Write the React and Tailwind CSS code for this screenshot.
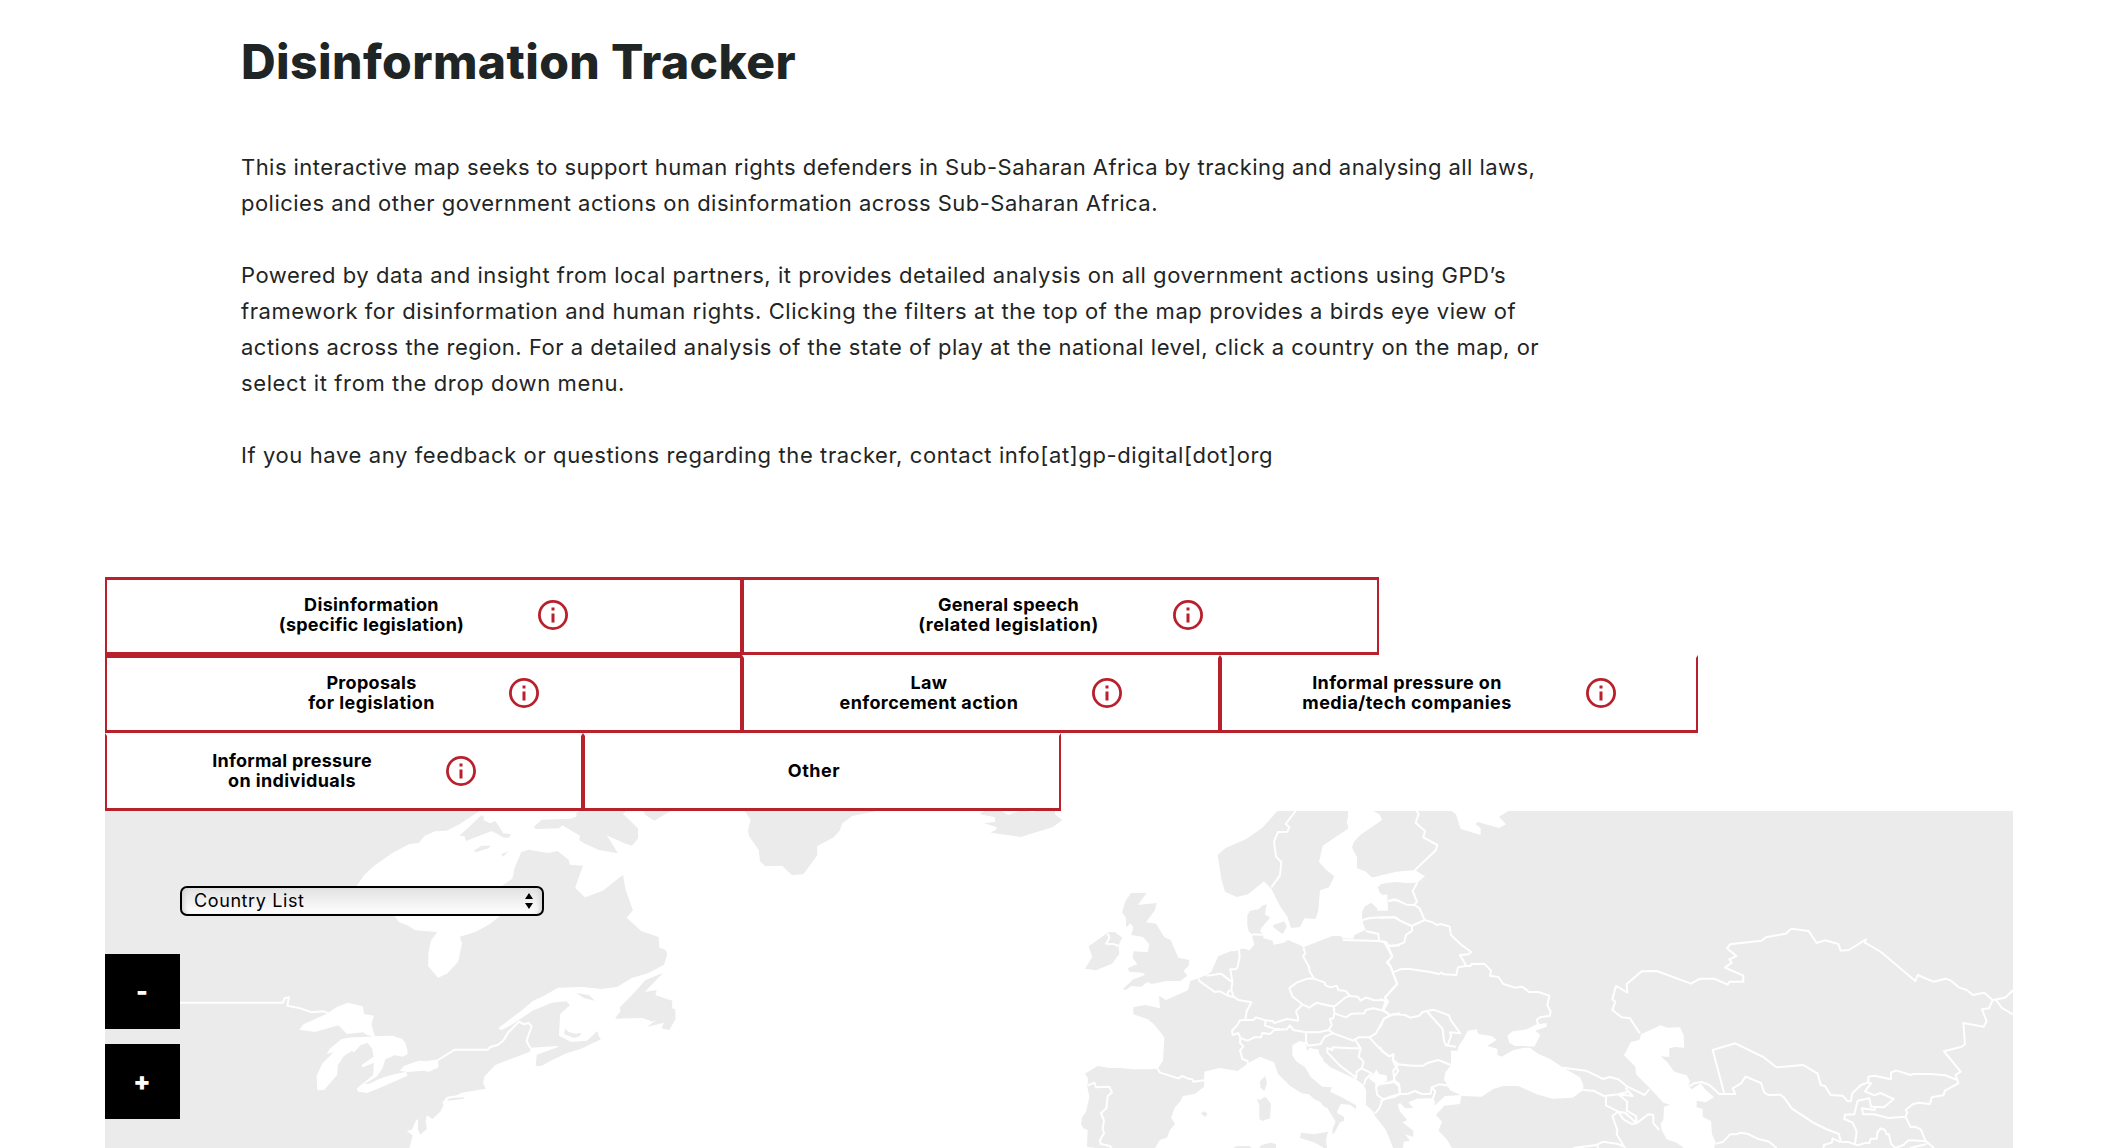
import React from "react";

const INTRO = [
  [
    { text: "This interactive map seeks to support human rights defenders in Sub-Saharan Africa by tracking and analysing all laws,", spacing: "tracking-[0.45px]" },
    { text: "policies and other government actions on disinformation across Sub-Saharan Africa.", spacing: "tracking-[0.48px]" },
  ],
  [
    { text: "Powered by data and insight from local partners, it provides detailed analysis on all government actions using GPD’s", spacing: "tracking-[0.53px]" },
    { text: "framework for disinformation and human rights. Clicking the filters at the top of the map provides a birds eye view of", spacing: "tracking-[0.56px]" },
    { text: "actions across the region. For a detailed analysis of the state of play at the national level, click a country on the map, or", spacing: "tracking-[0.5px]" },
    { text: "select it from the drop down menu.", spacing: "tracking-[0.61px]" },
  ],
  [{ text: "If you have any feedback or questions regarding the tracker, contact info[at]gp-digital[dot]org", spacing: "tracking-[0.6px]" }],
];

const FILTER_ROWS = [
  [
    { lines: [["Disinformation", "tracking-[0.35px]"], ["(specific legislation)", "tracking-[0.28px]"]], width: "w-[637px]", top: true, info: true },
    { lines: [["General speech", "tracking-[0.25px]"], ["(related legislation)", "tracking-[0.48px]"]], width: "w-[637px]", top: true, info: true },
  ],
  [
    { lines: [["Proposals", "tracking-[0.3px]"], ["for legislation", "tracking-[0.42px]"]], width: "w-[637px]", top: true, info: true },
    { lines: [["Law", "tracking-[0.4px]"], ["enforcement action", "tracking-[0.38px]"]], width: "w-[478px]", info: true },
    { lines: [["Informal pressure on", "tracking-[0.38px]"], ["media/tech companies", "tracking-[0.42px]"]], width: "w-[478px]", info: true },
  ],
  [
    { lines: [["Informal pressure", "tracking-[0.25px]"], ["on individuals", "tracking-[0.38px]"]], width: "w-[478px]", info: true },
    { lines: [["Other", "tracking-[0.5px]"]], width: "w-[478px]" },
  ],
];

function InfoIcon() {
  return (
    <svg className="h-[30px] w-[30px] shrink-0" viewBox="0 0 30 30" fill="none">
      <circle cx="15" cy="15" r="13.6" stroke="#b8202c" strokeWidth="2.8" />
      <path d="M13.5 7.4h3v3h-3zM13.5 13.4h3v9h-3z" fill="#b8202c" />
    </svg>
  );
}

function Filter({ item }) {
  return (
    <button
      className={`flex h-[78px] items-center justify-center gap-[74px] border-x-2 border-y-[3px] border-[#b8202c] pb-[2px] ${item.width} ${item.top ? "" : "border-t-transparent"} ${item.info ? "" : "pr-4"}`}
    >
      <span className="flex flex-col text-center text-[18px] leading-[20px] font-bold text-black">
        {item.lines.map(([text, spacing]) => (
          <span key={text} className={`whitespace-nowrap ${spacing}`}>{text}</span>
        ))}
      </span>
      {item.info && <InfoIcon />}
    </button>
  );
}

const AMERICA_LAND = [
  "38,33 985,33 935,72 902,92 872,94 846,108 832,128 806,133 764,160 718,198 693,226 672,262 730,320 770,348 782,367 805,377 822,391 878,396 862,422 856,458 855,498 880,533 903,521 931,485 941,430 935,410 975,396 1010,373 1035,350 1042,300 1037,262 1068,236 1074,203 1091,156 1109,149 1158,159 1183,153 1211,180 1213,194 1247,197 1237,229 1227,264 1252,292 1297,272 1348,224 1355,271 1373,331 1357,353 1395,394 1438,411 1440,443 1455,449 1460,462 1452,494 1411,520 1370,534 1333,561 1293,567 1246,561 1184,563 1147,588 1119,604 1093,630 1033,684 1040,691 1070,672 1119,632 1168,608 1205,604 1214,616 1189,642 1186,707 1217,726 1257,722 1283,693 1287,709 1292,718 1245,745 1202,761 1168,781 1140,799 1127,797 1130,764 1184,741 1182,738 1115,743 1112,755 1025,795 998,829 994,848 1001,866 940,878 928,886 903,890 891,908 894,916 886,935 866,957 852,946 849,962 852,987 835,1004 829,987 830,957 824,962 814,990 801,992 816,1006 808,1044 38,1044",
  "1122,80 1143,59 1215,56 1230,50 1230,38 1240,33 1355,33 1348,42 1386,85 1386,115 1371,137 1351,130 1307,106 1335,160 1287,150 1252,131 1237,120 1240,108 1195,76 1186,85 1128,87",
  "990,45 997,52 995,60 1012,70 1025,63 1036,82 1045,100 1065,102 1060,113 1047,113 1016,93 951,123 947,109 934,107 958,82",
  "970,153 990,137 1014,137 1008,145 977,156",
  "1040,163 1058,154 1045,170",
  "1400,33 1468,33 1427,62 1404,44",
  "1449,519 1420,555 1403,576 1433,570 1430,586 1473,602 1472,625 1480,628 1481,657 1465,690 1445,685 1452,668 1408,681 1432,661 1422,665 1398,654 1328,656 1342,632 1340,622 1375,580 1405,540",
];
const AMERICA_WATER = [
  "529,689 540,673 599,641 625,620 652,608 690,619 693,642 718,647 712,671 716,692 722,712 700,704 690,697 650,702 628,676 569,696",
  "599,762 606,747 636,717 663,712 690,712 700,730 685,735 668,757 662,753 642,768 627,795 625,825 592,870 575,871 573,827 588,790 616,757",
  "680,712 720,709 765,707 790,717 798,730 803,752 803,763 791,770 768,765 766,752 768,767 747,778 740,805 726,829 694,852 707,851 735,835 765,824 800,815 803,827 740,860 701,879 679,875 674,866 716,825 718,788 690,802 687,795 717,770 714,747 703,730 690,727",
  "783,812 795,797 832,782 850,784 880,778 882,802 857,815 843,812 803,816",
];
const AMERICA_ISLETS = [
  "1229,579 1262,585 1277,602 1250,595",
  "1202,685 1210,696 1228,701 1243,699 1238,709 1224,714 1199,702",
  "903,898 915,894 948,892 945,896 907,902",
];
const AMERICA_BORDERS = [
  "228,608 488,608 492,595 503,592 499,617 532,625 561,637 590,634 605,640",
  "880,780 923,749 1006,749 1012,741 1031,735 1045,722 1058,697 1085,665 1097,673 1109,669 1117,678 1104,723 1114,745",
];

const ATLANTIC_LAND = [
  "134,33 530,33 457,48 427,70 419,92 401,112 351,139 352,166 310,223 275,225 247,198 195,198 180,183 176,150 147,108 144,91 152,59",
  "853,33 905,33 925,45 957,33 981,33 998,36 1008,33 1065,33 1065,43 1087,61 1057,82 962,111 872,98 890,87 889,81 852,70 885,66 886,52 839,43",
];

const EUROPE_LAND = [
  "652,33 880,33 866,47 860,66 866,85 788,137 777,185 798,209 823,229 807,262 780,271 775,330 767,357 733,355 720,381 693,384 683,352 660,318 634,266 612,244 564,283 530,291 495,275 484,237 473,165 497,144 559,117 607,83",
  "931,33 960,45 967,60 900,105 882,125 876,142 891,172 891,204 918,215 935,232 975,227 1020,213 1020,33",
  "1020,246 1010,246 975,252 953,260 958,275 974,285 985,283 985,332 959,332 934,308 915,319 906,335 906,358 910,372 917,389 883,405 880,416 848,415 843,409 819,407 730,442 718,434 684,420 670,429 640,434 638,422 611,415 608,403 600,392 607,380 627,357 630,352 615,344 617,330 620,312 605,318 597,327 570,332 562,346 562,377 567,395 580,405 577,412 583,434 567,452 558,446 537,447 530,453 512,454 475,468 454,515 440,525 415,535 391,543 384,571 318,600 297,587 300,625 255,615 220,622 220,643 264,658 284,675 313,712 309,782 293,807 263,808 218,808 180,804 148,804 113,798 75,821 84,835 82,860 88,892 78,935 66,952 63,973 70,985 83,990 81,1040 108,1044 285,1044 300,1020 322,1012 330,990 345,972 333,953 345,922 360,905 368,889 405,881 432,860 433,815 478,804 533,813 566,788 600,770 642,787 654,822 690,857 725,880 747,883 762,897 780,905 792,920 802,924 827,965 818,985 817,1001 823,1000 840,967 852,962 852,950 830,938 842,912 870,914 888,928 888,916 842,890 810,875 816,862 787,860 753,832 735,802 708,783 697,765 697,736 718,723 738,727 741,753 750,743 762,747 775,748 778,762 790,778 790,783 812,802 850,820 887,837 910,854 918,870 918,915 940,935 945,948 978,990 1000,1044 1020,1044",
  "213,279 260,279 233,315 290,309 285,330 258,367 288,371 313,412 332,420 355,473 388,480 386,497 371,512 382,527 361,543 320,543 275,552 262,546 244,560 214,558 197,570 189,567 220,538 255,525 250,519 208,515 203,505 232,492 218,473 221,454 263,457 268,433 249,411 214,405 220,382 211,370 198,382 198,354 186,337 196,304",
  "147,396 164,396 187,413 175,436 178,461 156,491 108,511 75,506 97,471 86,439 138,402",
  "640,375 673,364 680,380 668,403 640,382",
  "600,845 615,827 621,850 613,873 601,863",
  "590,898 600,899 616,890 633,911 630,955 606,963 598,957 598,915",
  "422,940 434,934 443,942 435,951",
  "723,998 762,1003 804,995 798,1020 801,1044 792,1044 762,1027 720,1014",
  "520,1044 530,1038 568,1038 575,1044",
  "598,1044 603,1036 630,1028 648,1032 648,1044",
];
const EUROPE_WATER = [
  "943,818 949,808 957,822 980,826 982,842 965,850 948,865 945,850 926,835",
];
const EUROPE_BORDERS = [
  "707,33 677,72 688,82 682,95 654,96 642,125 648,170 664,186 660,226 634,262",
  "143,400 148,414 138,431 160,432 176,438",
  "578,403 608,404",
  "537,447 539,470 533,500 528,508 511,508 517,545 514,570 521,590 535,600 574,607 560,634 556,660 540,661 532,675 516,692 518,705 535,699 541,714 563,722 583,712 603,712 607,699 630,702 643,690 680,688 690,676 700,690 738,697 775,697 808,690",
  "415,535 420,545 465,576 480,574 505,588 521,590",
  "440,527 483,521 513,544",
  "505,588 503,577 512,569",
  "556,660 580,660 588,652 617,661 638,663 643,669 680,657 714,662 714,652 708,634 727,613",
  "617,661 615,677 643,686 660,687",
  "541,712 540,728 550,740 540,751 547,777 563,783 563,795",
  "730,442 736,460 729,468 747,500 749,514 761,535 742,536 710,548 688,564 697,589 727,613 748,623 770,608 815,619 826,617 858,591 870,588 857,573 835,570 830,557 813,562 797,557 793,547 761,536",
  "870,588 893,590 902,602 918,592 940,600 975,601 985,605",
  "822,619 823,640 858,652 875,641 913,640 917,630 940,625 970,632 990,645 1020,640",
  "823,640 820,655 810,657 815,675 806,690 820,700 880,722 895,712 928,712 948,700 972,656 990,645",
  "738,697 738,725 745,737 782,732 788,720 795,710 818,700",
  "848,420 956,423 976,425 985,440 997,470 981,487 992,500 1011,552 975,592 984,607 976,606 968,630",
  "917,393 955,402 957,422",
  "906,360 930,354 965,352 1005,352 1020,362",
  "976,425 986,437 1020,436",
  "985,303 1005,300 1020,303",
  "887,722 902,745 870,745 818,742 817,750 802,744 802,757 840,797 887,832",
  "902,745 896,770 911,785 905,805 890,815 888,837",
  "905,805 935,820 917,838 912,855",
  "928,712 960,747 988,769 1000,763 1000,780 1015,793 1000,812 1003,842 985,848 960,850 948,862 952,885 968,897 958,925 945,940",
  "968,897 1000,892 1018,883",
  "1003,842 1017,852 1020,880",
  "293,807 300,818 355,835 366,828 385,836 397,838 400,845 432,841",
  "83,857 103,848 108,862 148,860 156,878 143,888 139,925 123,940 132,962 128,985 132,1000 120,1020 122,1032 150,1038 155,1044",
];

const EAST_LAND = ["0,33 1899,33 1899,1044 40,1044 18,990 0,965"];
const EAST_WATER = [
  "-8,229 20,222 50,215 105,210 135,229 112,248 80,249 50,246 20,249 -8,255",
  "-8,275 10,285 22,283 24,332 -8,332",
  "-96,33 -20,33 0,45 7,60 -8,67 -60,105 -78,125 -96,137",
  "215,33 385,33 357,50 378,73 357,84 293,66 287,73 302,85 302,105 242,87 228,43",
  "53,915 60,908 75,925 100,924 85,907 110,896 155,895 165,903 163,917 195,888 245,885 240,912 193,917 168,945 186,965 176,992 200,1018 216,1044 68,1044 72,1025 90,1022 75,1003 100,1010 100,992 67,967 82,960 60,935",
  "213,752 232,752 236,738 250,718 263,692 290,688 295,702 335,708 350,719 322,738 353,747 352,764 365,770 400,750 432,743 450,743 472,760 510,777 555,806 600,832 610,855 610,870 578,893 517,896 470,883 415,858 370,858 340,867 305,890 248,888 210,871 192,838 197,815 213,795",
  "382,707 398,694 440,688 470,673 500,670 500,680 466,692 481,705 463,740 433,738 405,738 388,728",
  "783,703 842,676 862,683 900,682 911,705 913,743 885,741 868,745 868,771 842,769 862,787 883,815 920,826 930,843 925,857 935,868 962,850 975,867 1002,892 978,907 950,902 950,922 968,927 968,950 993,963 996,1003 1007,1025 1003,1044 912,1044 890,1028 860,1018 845,990 842,970 850,960 852,920 870,914 850,908 810,865 768,823 766,800 732,766 752,727 779,719",
];
const EAST_BORDERS = [
  "109,33 116,42 107,68 135,93 130,112 172,135 168,150 105,210",
  "112,248 98,273 111,305 103,315 80,314 45,298 25,303",
  "103,315 118,324 134,360 95,378 60,362 45,352 0,354",
  "134,360 160,368 170,375 183,372 209,380 213,405 247,437 274,456 265,463 240,465 259,498 234,502 229,525 190,523 185,517 178,522 150,516 85,506 60,508 38,517",
  "95,378 97,392 78,405 73,427 48,437 25,437",
  "0,423 14,428 37,470 22,487 33,500 38,517 52,552 15,592 24,606 10,630 30,645",
  "0,597 24,606",
  "259,498 270,498 275,492 313,491 333,512 330,527 355,531 370,552 405,563 427,560 447,576 475,576 508,587 502,616 512,635 510,647 480,652 470,660 475,673",
  "0,683 12,656 40,643 75,645 90,653 118,647 128,636 160,629 185,638 207,646 212,660 241,700 210,697 213,708 202,738",
  "142,636 188,687 192,722 198,736 228,740",
  "0,740 8,755 28,769 40,763 38,780 53,793 95,797 130,797 145,788 175,780 212,795",
  "38,780 55,813 43,830 42,846 57,858 60,882 85,881 105,873 125,882 152,881 155,862 178,853 208,857",
  "155,862 166,875 157,900",
  "0,853 43,846",
  "0,905 30,890 60,882",
  "550,803 618,812 670,837 688,831 715,838 742,860 794,885 808,867",
  "610,870 640,872 672,888 715,883 758,888 738,865 745,875 715,883 742,905 740,932 768,948 770,970 735,938 715,935 678,916 678,890",
  "715,935 730,958 755,972 770,970 805,943 820,945 820,970 838,990",
  "715,935 697,948 712,990 710,1003 735,1044",
  "580,1044 650,1035 670,1025 715,1032 730,1040",
  "650,1035 655,1044",
  "780,700 773,690 750,655 725,652 697,630 706,605 697,598 708,558 742,577 740,552 785,514 830,513 933,551 960,536 1002,536 1043,554 1048,545 1090,545 1090,527 1035,503 1055,488 1048,478 1069,468 1041,445 1050,433 1145,422 1158,412 1217,401 1234,386 1286,393 1310,429 1335,421 1375,432 1382,452 1407,450 1458,418 1455,428 1503,456 1606,543 1613,525 1660,545 1697,536 1713,542 1738,563 1760,570 1779,585 1813,578 1838,600 1875,593 1899,571",
  "1848,600 1866,624 1899,643",
  "1838,600 1827,625 1806,628 1820,664 1811,680 1750,669 1755,732 1745,740 1692,754 1742,815 1727,825 1732,840 1697,826 1650,822 1600,822 1592,825 1548,811 1533,818 1533,838 1483,827 1465,830 1465,847 1473,850 1455,874 1483,886 1501,879 1541,897 1512,922 1473,920 1468,895 1433,902 1423,943 1395,944 1393,957 1418,968 1430,995 1425,1032",
  "1465,847 1443,855 1417,880 1412,904 1403,904 1388,887 1352,885 1335,858 1322,855 1313,821 1270,795 1189,802 1150,771 1066,730 998,750 1033,881",
  "1732,840 1735,850 1695,872 1690,886 1655,892 1650,912 1616,908 1598,913 1577,930 1582,938 1576,950 1525,954 1483,943 1449,943 1446,925 1483,930 1488,920",
  "925,860 942,850 965,846 988,855 1018,882 1066,882 1058,865 1083,850 1097,830 1143,849 1153,878 1165,885 1200,884 1212,892 1235,925 1300,968 1338,987 1377,1002 1382,1023",
  "1007,1031 1030,1025 1050,1003 1070,1003 1080,998 1102,1001 1137,1018 1165,1024 1190,1044",
  "1330,1044 1332,1035 1355,1028 1358,1015 1378,1025 1405,1026 1433,1036 1460,1028 1468,1030 1472,1016 1490,1016 1492,998 1502,985 1515,990 1520,1003 1527,1003 1533,1032 1546,1044 1570,1035 1585,1021 1637,1023",
  "1576,950 1592,981 1605,980 1622,988 1637,1023 1662,1044",
  "1590,1044 1615,1038 1640,1032",
];

function Shapes({ transform, land = [], water = [], islets = [], borders = [] }) {
  return (
    <g transform={transform} strokeLinejoin="round">
      {land.map((p) => <polygon key={p} points={p} fill="#ebebeb" />)}
      {water.map((p) => <polygon key={p} points={p} fill="#fff" />)}
      {borders.map((p) => (
        <polyline key={p} points={p} fill="none" stroke="#fff" strokeWidth="2" vectorEffect="non-scaling-stroke" />
      ))}
      {islets.map((p) => (
        <polygon key={p} points={p} fill="#ebebeb" stroke="#fff" strokeWidth="3" vectorEffect="non-scaling-stroke" paintOrder="stroke" />
      ))}
    </g>
  );
}

function WorldMap() {
  return (
    <svg className="block h-[337px] w-[1908px]" viewBox="105 811 1908 337">
      <Shapes transform="translate(90 800) scale(.3954 .33333)" land={AMERICA_LAND} water={AMERICA_WATER} islets={AMERICA_ISLETS} borders={AMERICA_BORDERS} />
      <Shapes transform="translate(700 800) scale(.33333)" land={ATLANTIC_LAND} />
      <Shapes transform="translate(1380 800) scale(.33333)" land={EAST_LAND} />
      <Shapes transform="translate(1060 800) scale(.33333)" land={EUROPE_LAND} water={EUROPE_WATER} borders={EUROPE_BORDERS} />
      <Shapes transform="translate(1380 800) scale(.33333)" water={EAST_WATER} borders={EAST_BORDERS} />
    </svg>
  );
}

const ZOOM_BUTTON = "flex h-[75px] w-[75px] items-center justify-center bg-black pr-px text-[25px] leading-none font-black text-white";

export default function App() {
  return (
    <main className="h-[1148px] w-[2112px] overflow-hidden bg-white font-['Inter',sans-serif]">
      <header className="ml-[241px] pt-[33px] text-[#1f2524]">
        <h1 className="text-[48px] leading-[58px] font-extrabold tracking-[0.4px] whitespace-nowrap">Disinformation Tracker</h1>
        <div className="mt-[58px] flex flex-col gap-9 text-[22px] leading-9">
          {INTRO.map((lines, i) => (
            <p key={i}>
              {lines.map((l) => (
                <span key={l.text} className={`block whitespace-nowrap ${l.spacing}`}>{l.text}</span>
              ))}
            </p>
          ))}
        </div>
      </header>
      <section className="mt-[104px] ml-[105px]">
        {FILTER_ROWS.map((row, i) => (
          <div key={i} className="flex">
            {row.map((item) => <Filter key={item.lines[0][0]} item={item} />)}
          </div>
        ))}
        <div className="relative">
          <WorldMap />
          <div className="absolute top-[75px] left-[75px] flex h-[30px] w-[364px] items-center justify-between rounded-[7px] border-2 border-black bg-linear-to-b from-[#e2e2e2] to-white pr-[9px] pl-3 shadow-[inset_5px_0_5px_-3px_#d0d0d0,inset_-5px_0_5px_-3px_#d0d0d0]">
            <span className="pb-px text-[18px] leading-[25px] tracking-[0.6px] text-black">Country List</span>
            <svg className="h-4 w-2" viewBox="0 0 8 16"><path d="M4 0l4 6H0zM4 16l4-6H0z" /></svg>
          </div>
          <div className="absolute top-[143px] left-0 flex flex-col gap-[15px]">
            <button className={ZOOM_BUTTON}>-</button>
            <button className={ZOOM_BUTTON}>+</button>
          </div>
        </div>
      </section>
    </main>
  );
}
